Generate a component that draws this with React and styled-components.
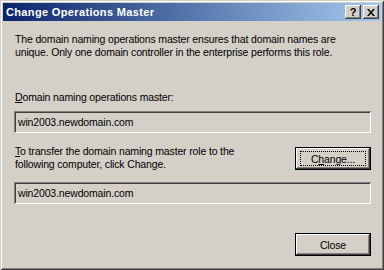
import styled, { createGlobalStyle } from 'styled-components';

const GlobalStyle = createGlobalStyle`
  html, body {
    margin: 0;
    padding: 0;
    background: #d4d0c8;
  }
  body {
    font-family: "Liberation Sans", Arial, sans-serif;
    font-size: 10.5px;
    letter-spacing: -0.15px;
    color: #000;
  }
`;

// --- window frame ---
const Window = styled.div`
  box-sizing: border-box;
  width: 384px;
  height: 270px;
  padding: 3px;
  background: #d4d0c8;
  box-shadow:
    inset 1px 1px 0 #d4d0c8,
    inset -1px -1px 0 #404040,
    inset 2px 2px 0 #ffffff,
    inset -2px -2px 0 #808080;
  display: flex;
  flex-direction: column;
`;

const TitleBar = styled.div`
  height: 18px;
  display: flex;
  align-items: center;
  justify-content: space-between;
  padding: 0 2px 0 3px;
  background: linear-gradient(to right, #0a246a, #a6caf0);
`;

const Title = styled.span`
  color: #fff;
  font-weight: bold;
  font-size: 11px;
  letter-spacing: 0.35px;
`;

const TitleButtons = styled.div`
  display: flex;
  gap: 2px;
`;

const CaptionButton = styled.div`
  box-sizing: border-box;
  width: 16px;
  height: 14px;
  background: #d4d0c8;
  box-shadow:
    inset -1px -1px 0 #404040,
    inset 1px 1px 0 #ffffff,
    inset -2px -2px 0 #808080,
    inset 2px 2px 0 #d4d0c8;
  display: flex;
  align-items: center;
  justify-content: center;
  font-weight: bold;
  font-size: 11px;
  letter-spacing: 0;
  line-height: 1;
`;

// --- content ---
const Body = styled.div`
  flex: 1;
  display: flex;
  flex-direction: column;
  padding: 12px 10px 0 11px;
`;

const Text = styled.div`
  line-height: 13px;
  padding-left: 1px;
  margin-top: ${(p) => p.gap || 0}px;
`;

const Key = styled.span`
  text-decoration: underline;
`;

const Field = styled.div`
  box-sizing: border-box;
  height: 22px;
  margin-top: ${(p) => p.gap || 0}px;
  padding: 0 4px;
  display: flex;
  align-items: center;
  background: #d4d0c8;
  box-shadow:
    inset 1px 1px 0 #808080,
    inset -1px -1px 0 #ffffff,
    inset 2px 2px 0 #404040,
    inset -2px -2px 0 #d4d0c8;
`;

const Row = styled.div`
  display: flex;
  justify-content: space-between;
  align-items: flex-start;
  margin-top: 12px;
`;

const Button = styled.button`
  box-sizing: border-box;
  width: 76px;
  height: 23px;
  margin-top: ${(p) => p.gap || 0}px;
  padding: 0;
  border: 1px solid #000;
  background: #d4d0c8;
  font: inherit;
  letter-spacing: inherit;
  color: #000;
  box-shadow:
    inset -1px -1px 0 #404040,
    inset 1px 1px 0 #ffffff,
    inset -2px -2px 0 #808080;
  display: flex;
  align-items: center;
  justify-content: center;
`;

const Focus = styled.span`
  display: flex;
  align-items: center;
  justify-content: center;
  width: 66px;
  height: 15px;
  box-sizing: border-box;
  border: 1px dotted #000;
`;

const Footer = styled.div`
  display: flex;
  justify-content: flex-end;
  margin-top: 29px;
`;

const App = () => (
  <>
    <GlobalStyle />
    <Window>
      <TitleBar>
        <Title>Change Operations Master</Title>
        <TitleButtons>
          <CaptionButton>?</CaptionButton>
          <CaptionButton>
            <svg width="8" height="7" viewBox="0 0 8 7">
              <path d="M0 0h2l2 2.5L6 0h2L5 3.5 8 7H6L4 4.5 2 7H0l3-3.5z" fill="#000" />
            </svg>
          </CaptionButton>
        </TitleButtons>
      </TitleBar>
      <Body>
        <Text>
          The domain naming operations master ensures that domain names are
          <br />
          unique. Only one domain controller in the enterprise performs this role.
        </Text>
        <Text gap={32}>
          <Key>D</Key>omain naming operations master:
        </Text>
        <Field gap={7}>win2003.newdomain.com</Field>
        <Row>
          <Text>
            <Key>T</Key>o transfer the domain naming master role to the
            <br />
            following computer, click Change.
          </Text>
          <Button gap={2}>
            <Focus>
              C<Key>h</Key>ange...
            </Focus>
          </Button>
        </Row>
        <Field gap={11}>win2003.newdomain.com</Field>
        <Footer>
          <Button>Close</Button>
        </Footer>
      </Body>
    </Window>
  </>
);

export default App;
